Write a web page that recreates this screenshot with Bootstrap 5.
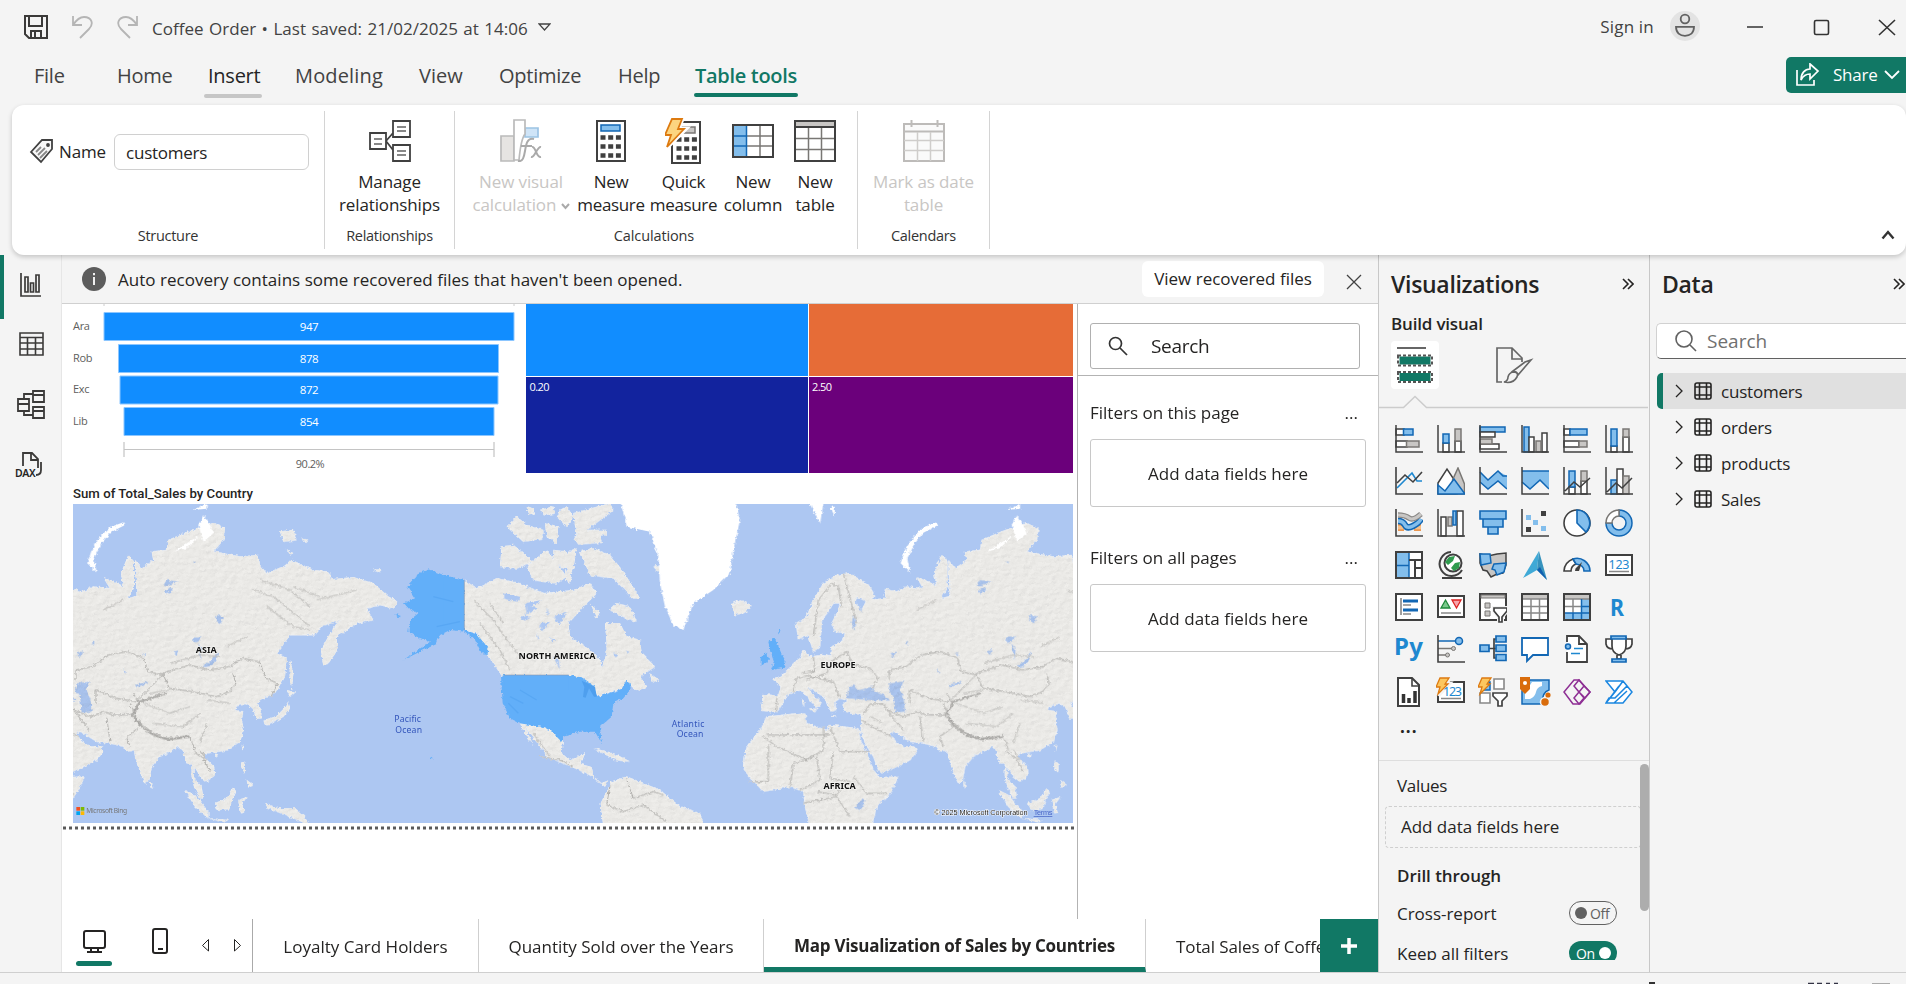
<!DOCTYPE html>
<html lang="en">
<head>
<meta charset="utf-8">
<title>Coffee Order</title>
<link href="https://cdn.jsdelivr.net/npm/bootstrap@5.3.0/dist/css/bootstrap.min.css" rel="stylesheet">
<style>
:root{--pbi-green:#117865;--pane:#f4f4f4;--ink:#252423}
html,body{height:100%;overflow:hidden}
body{background:var(--pane);font-family:"Open Sans","Noto Sans",sans-serif;color:var(--ink);font-size:17px;line-height:23px;letter-spacing:0}
svg{display:block;flex:none}
/* title bar and tabs */
.titlebar{height:50px;padding-left:24px;color:#424242}
.titlebar .save{margin-top:15px}
.titlebar .hist{margin-top:16px}
.doc{margin:17px 0 0 14px;letter-spacing:.02px;word-spacing:1px}
.doc-arrow{margin:23px 0 0 10px}
.signin{margin:15px 16px 0 0;letter-spacing:.2px}
.avatar{margin-top:11px}
.tabs{height:55px;font-size:20px;line-height:28px;color:#424242;letter-spacing:-.25px;padding-left:34px}
.tabs .tab{padding-top:12px;height:43px;flex:none;width:83px}
.tabs .tab:nth-child(2){width:91px}
.tabs .tab:nth-child(3){width:87px;color:#242424}
.tabs .tab:nth-child(4){width:124px;letter-spacing:.15px}
.tabs .tab:nth-child(5){width:80px;letter-spacing:0}
.tabs .tab:nth-child(6){width:119px}
.tabs .tab:nth-child(7){width:77px}
.tabs .tab:nth-child(8){width:110px;color:var(--pbi-green);font-weight:600;letter-spacing:-.3px}
.tabs i{display:block;height:4px;width:58px;border-radius:2px;background:#c6c6c6;margin:4px 0 0 -4px}
.tabs .tab:nth-child(8) i{background:var(--pbi-green);margin:3px 0 0 -1px;width:104px}
.share{height:36px;width:120px;background:var(--pbi-green);color:#fff;border-radius:5px 0 0 5px;font-size:17px;padding-left:9px;margin-top:7px}
.share span{margin:0 7px 0 12px}
/* ribbon */
.ribbon{height:150px;margin-left:12px;background:#fff;border-radius:12px;box-shadow:0 2px 5px rgba(0,0,0,.2);position:relative;z-index:3;padding:6px 0;letter-spacing:-.12px}
.grp{height:138px;border-right:1.5px solid #d4d4d4;display:flex;flex-direction:column;width:130px}
.g-structure{width:313px}.g-calc{width:403px}.g-cal{width:132px}
.grp .cap{margin-top:auto;height:24px;line-height:22px;font-size:14.5px;letter-spacing:-.3px;text-align:center;color:#333}
.g-calc .cap{padding-right:4px;letter-spacing:-.12px}
.namerow{padding:23px 0 0 17px}
.namerow svg{margin:4px 4px 0 0}
.namerow label{margin-top:6px}
.nm{width:195px;height:36px;border:1.5px solid #d0d0d0;border-radius:6px;padding:6px 0 0 11px;margin-left:8px;letter-spacing:-.25px}
.rb{text-align:center;display:flex;flex-direction:column;align-items:center}
.rb .ic{height:53px;padding-top:6px;margin-bottom:6px;display:flex;align-items:center}
.g-calc .rb:nth-child(1){width:108px}.g-calc .rb:nth-child(2){width:72px}.g-calc .rb:nth-child(3){width:73px}.g-calc .rb:nth-child(4){width:66px}.g-calc .rb:nth-child(5){width:58px}
.g-calc .row-btns{padding-left:12px}
.g-calc .rb:nth-child(2),.g-calc .rb:nth-child(3){letter-spacing:-.35px}
.dis{color:#c8c6c4}
.collapse-arrow{margin:0 11px 9px 0}
/* body */
.rail{width:62px;border-right:1px solid #e6e6e6;position:relative}
.rail .on{position:absolute;left:0;top:0;width:4px;height:64px;background:var(--pbi-green)}
.center{width:1316px}
.notice{height:49px;border-bottom:1.5px solid #d0d0d0;padding:0 16px 0 20px}
.notice .msg{margin-left:12px;letter-spacing:.02px}
.notice .close-x{margin:5px 0 0 22px}
.vrf{width:182px;height:36px;background:#fff;border-radius:6px;text-align:center;padding-top:6px}
.report{width:1015px;background:#fff;height:615px;overflow:hidden}
.worldmap{margin:-1px 0 0 11px}
.filters{border-left:1.5px solid #b3b3b3;background:#fff}
.fsearch{width:270px;height:46px;border:1.5px solid #b0b0b0;border-radius:3px;margin:19px 0 6px 12px;font-size:19px;padding-left:17px;letter-spacing:-.3px}
.fsearch span{margin-left:23px}
.flist{border-top:1.5px solid #b3b3b3;padding:25px 0 0 12px}
.drop{width:276px;height:68px;border:1.5px solid #c8c8c8;border-radius:3px;display:flex;align-items:center;justify-content:center;margin:14px 0 39px;letter-spacing:.05px}
.frow{width:268px;height:24px}
.pages{height:53px;background:#fff}
.pages .pg{height:53px;display:flex;align-items:center;justify-content:center;border-right:1.5px solid #cfcfcf;padding-top:2px;width:227px}
.pages .pg:nth-of-type(1){border-left:1.5px solid #aaa}
.pages .pg:nth-of-type(2){width:285px}
.pages .act{font-weight:700;border-bottom:5px solid var(--pbi-green);padding-top:5px;width:382px!important;letter-spacing:-.28px}
.pages .cut{width:174px;padding-left:30px;letter-spacing:-.1px}
.addp{width:58px;background:var(--pbi-green);height:53px}
.viz{width:272px;border-left:1.5px solid #c8c8c8;border-right:1.5px solid #c8c8c8}
.phead{padding:13px 15px 0 12px}
.data .phead{padding-right:1px}
.ptitle{font-size:23px;font-weight:600;line-height:32px;letter-spacing:-.3px}
.build{padding:12px 0 1px 12px;font-weight:600;letter-spacing:-.18px}
.icg{display:grid;grid-template-columns:repeat(6,42px);grid-auto-rows:42px;padding:16px 0 0 16px}
.wide{margin-left:-1px}
.more{height:55px;margin-top:-14px;padding:10px 0 0 21px;letter-spacing:1px;font-weight:700}
.wells{border-top:1.5px solid #dedede;height:200px;overflow:hidden}
.wells>.fields{width:261px}
.wlabel{padding:13px 0 0 18px;height:45px;letter-spacing:-.3px}
.dash{width:256px;height:42px;border:1.5px dashed #cfcfcf;border-radius:4px;margin-left:6px;padding:8px 0 0 15px;letter-spacing:-.03px}
.drill{padding:16px 0 0 18px;font-weight:600;letter-spacing:-.05px}
.opt{padding:14px 23px 0 18px;letter-spacing:-.02px}
.opt+.opt{padding-top:16px}
.sb{width:9px;height:147px;background:#adadad;border-radius:5px;margin-top:3px}
.tg{width:48px;height:24px;border-radius:12px;font-size:14px;display:flex;align-items:center;letter-spacing:-.3px}
.tg.off{border:1.5px solid #616161;color:#616161;padding-left:5px}
.tg.onn{background:var(--pbi-green);color:#fff;padding-left:7px}
.knob{width:12px;height:12px;border-radius:50%;background:#616161;margin-right:3px}
.onn .knob{background:#fff;margin-left:4px}
.dsearch{height:36px;width:250px;background:#fff;border:1.5px solid #d1d1d1;border-right:0;border-bottom:1.5px solid #616161;border-radius:5px 0 0 5px;margin:23px 0 14px 6px;padding-left:18px;font-size:19px;color:#707070}
.dsearch span{margin-left:10px}
.tb{height:36px;margin-left:7px;padding-left:18px;letter-spacing:-.2px}
.tb span{margin-left:-8px}
.tb.cur{background:#e0e0e0;border-left:6px solid var(--pbi-green);border-radius:5px 0 0 5px;padding-left:12px}
.status{height:12px;border-top:1.5px solid #cfcfcf;overflow:hidden}
/* icon strokes: dark outline, blue, grey */
.k{stroke:#404040;fill:#fff}.b{stroke:#1267b4;fill:#83beec}.g{stroke:#797774;fill:#c8c6c4}.n{fill:none}
</style>
</head>
<body class="d-flex flex-column">
<header class="flex-shrink-0">
 <div class="titlebar d-flex align-items-start">
  <svg class="save" width="24" height="24" viewBox="0 0 24 24" fill="none" stroke="#3b3a39" stroke-width="2"><path d="M1 1h22v22H5l-4-4zM5 1v10h13V1M7 23v-7h10v7M11 16v6"/></svg>
  <svg class="hist ms-4" width="21" height="23" viewBox="0 0 21 23" fill="none" stroke="#b5b5b5" stroke-width="1.800"><path d="M1 0v9h9M1 9C5 3 9 1 12 1c8 0 10 7 5 12l-9 9"/></svg>
  <svg class="hist ms-4" width="21" height="23" viewBox="0 0 21 23" fill="none" stroke="#b5b5b5" stroke-width="1.800"><path d="M20 0v9h-9M20 9C16 3 12 1 9 1 1 1-1 8 4 13l9 9"/></svg>
  <span class="doc text-nowrap">Coffee Order • Last saved: 21/02/2025 at 14:06</span>
  <svg class="doc-arrow" width="13" height="9" viewBox="0 0 13 9" fill="none" stroke="#424242" stroke-width="1.300"><path d="M1 1h11L6.500 7z"/></svg>
  <div class="d-flex ms-auto">
   <span class="signin text-nowrap">Sign in</span>
   <svg class="avatar" width="30" height="30" viewBox="0 0 30 30"><circle cx="15" cy="15" r="15" fill="#e3e3e3"/><g fill="none" stroke="#616161" stroke-width="1.800"><circle cx="15" cy="8" r="4.300"/><path d="M6 15.800h18c0 6-4 9-9 9s-9-3-9-9z"/></g></svg>
   <svg width="206" height="50" viewBox="1700 0 206 50" fill="none" stroke="#333" stroke-width="1.600"><path d="M1747 27h16M1879 20l16 15M1895 20l-16 15"/><rect x="1814.500" y="20.500" width="14" height="14" rx="1.500"/></svg>
  </div>
 </div>
 <nav class="tabs d-flex">
  <span class="tab">File</span><span class="tab">Home</span><span class="tab">Insert<i></i></span><span class="tab">Modeling</span><span class="tab">View</span><span class="tab">Optimize</span><span class="tab">Help</span><span class="tab">Table tools<i></i></span>
  <div class="share ms-auto d-flex align-items-center">
   <svg width="26" height="24" viewBox="0 0 26 24" fill="none" stroke="#fff" stroke-width="1.700"><path d="M2 7v15h17v-5M15 1l8 7-8 8v-5c-4 0-7 2-9 6 0-7 4-11 9-11z"/></svg>
   <span>Share</span>
   <svg width="16" height="10" viewBox="0 0 16 10" fill="none" stroke="#fff" stroke-width="1.800"><path d="M1 1l7 7 7-7"/></svg>
  </div>
 </nav>
</header>

<section class="ribbon d-flex flex-shrink-0">
 <div class="grp g-structure">
  <div class="namerow d-flex">
   <svg width="26" height="26" viewBox="0 0 26 26" fill="#f8f8f8" stroke="#404040" stroke-width="1.800"><path d="M2 14L13 2h10v9L12 24z"/><circle cx="19" cy="7" r="1" fill="#404040"/><path stroke="#888" d="M7 14l5-5M9 17l7-7M11 20l7-7"/></svg>
   <label>Name</label><div class="nm">customers</div>
  </div>
  <div class="cap">Structure</div>
 </div>
 <div class="grp">
  <div class="rb"><div class="ic"><svg width="42" height="42" viewBox="0 0 42 42" stroke-width="1.800"><path d="M17 21L24 13M17 21l7 9" class="k"/><path class="k" d="M1 13h16v16H1zM24 1h17v16H24zM24 25h17v16H24z"/><path stroke="#888" d="M5 19h8M5 24h8M28 7h9M28 11h9M28 31h9M28 35h9"/></svg></div><span>Manage</span><span>relationships</span></div>
  <div class="cap">Relationships</div>
 </div>
 <div class="grp g-calc">
  <div class="row-btns d-flex">
   <div class="rb dis"><div class="ic"><svg width="42" height="43" viewBox="0 0 42 43" stroke-width="1.700"><path d="M1 17h13v25H1z" fill="#e6e4e2" stroke="#bbb"/><path d="M25 9h13v9H25z" fill="#cfe4f7" stroke="#9cc3e4"/><path d="M14 1h11v14c-4 5-5 15-6 26h-5z" fill="#fff" stroke="#bbb"/><path d="M18 42c5 1 6-4 7-10s2-14 9-12M21 27h11M32 28c4-1 4 11 9 10M41 28c-4-1-6 11-10 10" fill="none" stroke="#aaa" stroke-width="2"/></svg></div><span class="text-nowrap">New visual</span><span class="text-nowrap">calculation <svg class="d-inline" width="9" height="7" viewBox="0 0 9 7" fill="none" stroke="#aaa" stroke-width="2"><path d="M1 1l3.500 4L8 1"/></svg></span></div>
   <div class="rb"><div class="ic"><svg width="30" height="42" viewBox="0 0 30 42"><path class="k" stroke-width="2" d="M1 1h28v40H1z"/><path class="b" stroke-width="1.500" d="M5 5h19v6H5z"/><path stroke="#404040" stroke-width="4.500" stroke-dasharray="5 2.700" d="M4.500 17.500H25M4.500 26.500H25M4.500 35.500H25"/></svg></div><span>New</span><span>measure</span></div>
   <div class="rb"><div class="ic"><svg width="38" height="46" viewBox="2 0 38 46"><path class="k" stroke-width="2" d="M9 4h28v41H9z"/><path class="g" stroke-width="1.500" d="M17 9h15v6H17z"/><path stroke="#404040" stroke-width="4.500" stroke-dasharray="5 2.700" d="M13.500 21.500H34M13.500 30.500H34M13.500 39.500H34"/><path d="M9 1h10l-4 10h7L3 30l4-12H1z" fill="#fcd580" stroke="#fff" stroke-width="5"/><path d="M9 1h10l-4 10h6L4 29l4-12H2z" fill="#fcd580" stroke="#dd7a10" stroke-width="1.800"/></svg></div><span>Quick</span><span>measure</span></div>
   <div class="rb"><div class="ic"><svg width="42" height="34" viewBox="0 0 42 34" stroke-width="2"><path class="k" d="M1 1h40v32H1z"/><path d="M28 2v30M15 12h26M15 22h26" stroke="#797774" stroke-width="1.500"/><path d="M2 2h12v30H2z" fill="#83beec"/><path d="M14.500 2v30M2 12h12M2 22h12" stroke="#1267b4" stroke-width="1.500"/><path class="n" stroke="#404040" d="M1 1h40v32H1z"/></svg></div><span>New</span><span>column</span></div>
   <div class="rb"><div class="ic"><svg width="42" height="42" viewBox="0 0 42 42" stroke-width="2"><path class="k" d="M1 1h40v40H1z"/><path d="M2 2h38v5H2z" fill="#c8c6c4"/><path d="M2 7h38" stroke="#404040"/><path d="M14.500 8v32M27.500 8v32M2 18.500h38M2 29.500h38" stroke="#797774" stroke-width="1.500"/></svg></div><span>New</span><span>table</span></div>
  </div>
  <div class="cap">Calculations</div>
 </div>
 <div class="grp g-cal">
  <div class="rb dis"><div class="ic"><svg width="42" height="42" viewBox="0 0 42 42" stroke-width="2" fill="#fafafa" stroke="#bdbbb9"><path d="M1 4h40v37H1zM1 11.500h40M8.500 0v7M34.500 0v7"/><path d="M14.500 12v29M27.500 12v29M1 20.500h40M1 30.500h40" stroke="#cfcdcb" stroke-width="1.500"/></svg></div><span>Mark as date</span><span>table</span></div>
  <div class="cap">Calendars</div>
 </div>
 <svg class="collapse-arrow ms-auto align-self-end" width="14" height="10" viewBox="0 0 14 10" fill="none" stroke="#333" stroke-width="2.400"><path d="M1.500 8.500L7 2l5.500 6.500"/></svg>
</section>

<main class="d-flex flex-grow-1 overflow-hidden">
 <nav class="rail flex-shrink-0">
  <div class="on"></div>
  <svg width="61" height="240" viewBox="0 255 61 240" fill="none" stroke="#3b3a39" stroke-width="2">
   <path d="M21 273v23h20M25 277h3v15h-3zM30.500 283h3v9h-3zM36 275h3v17h-3z" stroke-width="1.700"/>
   <path d="M20 333h23v22H20zM20 337.500h23M20 343h23M20 349h23M27.500 337v18M35.500 337v18" stroke-width="1.600"/>
   <path d="M18 399h11v12H18zM18 404h11M33 391h11v11H33zM33 395h11M33 407h11v11H33zM33 411h11M24 399v-5h9M24 411v4h9" stroke-width="1.800"/>
   <path d="M23 466v-13h9l6 6v9M31 453v7h7M41 462v8q0 5-5 5" stroke-width="1.800"/>
   <text x="15" y="477" font-family="Noto Sans" font-weight="600" font-size="10.500" letter-spacing="-.3" fill="#252423" stroke="none">DAX</text>
  </svg>
 </nav>
 <div class="center d-flex flex-column flex-shrink-0">
  <div class="notice d-flex align-items-center">
   <svg width="24" height="24" viewBox="0 0 24 24"><circle cx="12" cy="12" r="12" fill="#5c5c5c"/><path d="M12 10v8M12 6v2.200" stroke="#fff" stroke-width="1.800"/></svg>
   <span class="msg text-nowrap">Auto recovery contains some recovered files that haven't been opened.</span>
   <div class="vrf ms-auto">View recovered files</div>
   <svg class="close-x" width="16" height="16" viewBox="0 0 16 16" stroke="#424242" stroke-width="1.300"><path d="M1 1l14 14M15 1L1 15"/></svg>
  </div>
  <div class="d-flex">
   <div class="report">
    <svg width="1015" height="201" viewBox="62 304 1015 201" font-family="Open Sans" font-size="11">
     <path d="M104 304v2M514 304v2" stroke="#ccc"/>
     <g fill="#118dff" stroke="#8cc6ff"><path d="M104 312.500h410v28H104zM118.500 344.500h380v28h-380zM120 376h378v28H120zM124 407.500h370v28H124z"/></g>
     <g fill="#fff" text-anchor="middle" letter-spacing="-.4" font-size="11.500"><text x="309" y="331">947</text><text x="309" y="363">878</text><text x="309" y="394">872</text><text x="309" y="426">854</text></g>
     <g fill="#605e5c" font-size="11" letter-spacing="-.3"><text x="73" y="330">Ara</text><text x="73" y="362">Rob</text><text x="73" y="393">Exc</text><text x="73" y="425">Lib</text><text x="310" y="468" text-anchor="middle" letter-spacing="-.5">90.2%</text></g>
     <path d="M124 442v15M494 442v15M124 449.500h370" stroke="#c4c4c4" fill="none" stroke-width="1.200"/>
     <path fill="#118dff" d="M526 304h282v72H526z"/><path fill="#e66c37" d="M809 304h264v72H809z"/><path fill="#12239e" d="M526 377h282v96H526z"/><path fill="#6b007b" d="M809 377h264v96H809z"/>
     <g fill="#fff" font-size="11"><text x="529.500" y="391" textLength="20">0.20</text><text x="812" y="391" textLength="20">2.50</text></g>
     <text x="73" y="497.500" font-family="Roboto" font-size="13.200" font-weight="500" fill="#252423" textLength="180">Sum of Total_Sales by Country</text>
    </svg>
    <svg class="worldmap" width="1000" height="319" viewBox="39 42 3000 957">
     <defs>
      <filter id="coast" x="-5%" y="-5%" width="110%" height="110%"><feTurbulence type="fractalNoise" baseFrequency=".11" numOctaves="3" seed="4"/><feDisplacementMap in="SourceGraphic" scale="12" xChannelSelector="R" yChannelSelector="G"/></filter>
      <filter id="relief" x="0" y="0" width="100%" height="100%" color-interpolation-filters="sRGB"><feTurbulence type="fractalNoise" baseFrequency=".05 .09" numOctaves="3" seed="9" result="n"/><feDiffuseLighting in="n" surfaceScale="1.100" lighting-color="#ffffff" result="l"><feDistantLight azimuth="225" elevation="76"/></feDiffuseLighting><feComposite in="l" in2="SourceGraphic" operator="in" result="s"/><feBlend in="s" in2="SourceGraphic" mode="multiply"/></filter>
      <g id="ea">
       <path fill="#f2f1ee" d="M-20 330L35 325 35 297 70 305 100 290 150 295 130 262 165 275 190 290 183 250 205 195 222 215 222 290 205 325 230 318 225 210 245 235 280 212 275 185 320 180 325 150 385 125 425 110 460 100 495 115 490 150 460 185 540 200 595 195 600 225 620 250 680 225 695 210 760 240 805 245 815 268 880 262 940 280 985 320 1012 335 1000 355 960 345 920 355 940 390 890 400 855 425 830 435 832 480 805 520 790 525 783 480 805 440 830 400 845 392 790 405 765 435 690 435 665 470 650 490 680 505 675 560 650 605 610 625 590 640 605 660 602 685 588 685 578 655 560 640 530 648 525 660 550 665 545 690 552 720 540 755 500 780 440 790 430 800 462 830 465 855 440 875 420 860 410 840 400 835 402 865 425 890 430 925 420 925 402 890 395 860 395 820 380 820 368 780 355 770 330 785 300 800 275 830 268 870 255 880 245 860 225 800 222 780 200 785 190 770 150 760 110 755 62 725 50 730 65 755 90 770 125 770 130 785 110 810 60 835 25 850 15 840 0 800 -25 760 -37 725 -35 672 -60 672 -85 665 -92 645 -80 632 -100 625 -115 635 -112 660 -125 665 -140 640 -150 620 -195 592 -190 605 -155 640 -170 655 -190 630 -215 600 -235 605 -260 615 -272 640 -290 668 -335 662 -332 612 -285 618 -278 590 -300 565 -280 560 -260 545 -240 520 -220 505 -212 480 -200 485 -195 500 -150 495 -130 500 -125 470 -90 450 -85 430 -115 425 -125 400 -105 360 -100 340 -120 340 -135 365 -155 390 -160 470 -180 485 -195 435 -225 450 -232 400 -200 380 -180 330 -150 280 -110 255 -70 250 -10 290 5 320 -20 335 -50 320 -55 340 -35 360z"/>
       <path fill="#f2f1ee" d="M-320 680L-205 668-200 700-140 720-130 705-45 715-40 745-15 800 0 840 20 862 72 860 60 890 10 950-5 1010-190 1010-205 950-210 905-250 890-330 905-380 850-390 830-380 770-340 720z"/>
       <path fill="#adc7f2" d="M50 580L90 575 80 600 92 630 95 665 65 668 60 620 45 600zM-80 625L-75 595-58 582-45 600-30 598-5 590 0 600 40 620 50 632 10 632-40 628zM470 375l22 5-10 20-15-8zM430 525q30-5 40-40l4 4q-8 40-40 42zM320 270l35 5-35 12 20 12-20 15-5-10 15-12-20-6zM400 440l25 0-10 15-15 4zM415 460l12 20-4 30-5-25zM340 485l15-5-5 15zM225 585l35-10 5 5-35 12zM190 535l8 12-4 4zM245 488l10 6-2 6zM52 490l18-6-12 20zM95 460l8-8 0 12zM-55 955l20-30 12 5-15 30zM400 213l8 4-6 3zM-60 375l8 30-5 15-8-20zM-45 350l12 8-6 8z"/>
       <path fill="#f2f1ee" d="M660 125l40-5 10 30-40 5zM720 145l25 5-5 8zM940 240l25-2-8 8zM680 178l20 12-8 6zM690 510l10 40-5 50-6-40zM685 635l5 20-20 25-50 25-10-12 40-15 20-20zM680 600l25 8-15 12zM375 900l30 15 40 50 0 20-40-35zM465 940l35-15 20-30 8 12-12 20-8 30-35 2zM445 985l60 5-10 6zM535 930l25-8-15 20 8 25-10 2zM545 815l10 5 0 30-12-20zM560 870l20 15-15 8zM270 872l10 18-8 4zM615 940l40 15 50 0 30 25 10 25-30-15-50-20-40-15zM545 765l6 0-3 18zM465 790l10 5-8 8zM39 880l35-18-20 40-20 30zM-215 630l8-2-2 22zM-190 655l20 2-5 10zM-125 675l15 2-12 4z"/>
       <path fill="none" stroke="#b5b4b1" stroke-width="3" d="M48 570l0-30 50-10 45-35 60-10 50 20 10 40 45 10-30 30-50 50-60-10-60-25 0 40M308 550l80-25 60 15 60-10 40-25 50 10 20 50 35 15-20 40M308 550l20 45 70 10 70 15 40-15 20-25-10-30M40 660l50 20 40-15 30 10 50 0 30-30-20-35M210 640l30 70-40 30 10 30M230 690l50 40 50 20 60-10 15 40M400 785l30 20 20 40M420 780l20 30M150 755l-10-75M-35 690l30 20 60 30M-30 672l20-30 40 0 20 30 40 50M-290 665l0-45M-240 605l10-40 40-10M-200 570l60-20 20-40 40-25 20 40 50 10 25 30-20 30M-180 500l5 45-40 5M-190 560l70 15 20 50M-180 440l15-110 40-50 20 10 10 60M-90 250l40 150M-320 735l190 0M-330 740l40 30 90 40 50-30 0-70M-130 710l30 75 90 0M-315 765l0 110-60 0M-250 890l10-70 60-20M-170 800l10 70-60 30M-120 785l-10 80 60 10M-60 860l40 50 60 0M-210 940l100-20 40 60M-170 905l60 10 20-30"/>
       <path fill="none" stroke="#a4a3a0" stroke-width="7" opacity=".75" d="M222 680q35 55 100 67l68-8M215 680l25-45 80-25"/>
       <path fill="none" stroke="#cfcecb" stroke-width="4" d="M580 300l60 20 50 40 60 50M600 270l90 30 60 50M620 350l80 60 50 10M250 640l80 30 60-20M280 700l90 10 50-40M440 700l-20 60M500 470l60-30M330 520l90-25 60 5M270 610l60-10M-10 680l40 20M440 630l70 10M770 330l120-30M700 290l80 30M130 360l60-30"/>
      </g>
      <g id="snow" fill="#fff"><path d="M190 97L150 112 120 140 95 180 82 220 110 248 102 205 125 160 150 128 195 105zM430 75l20 30 10 25-30 25-15-50zM400 60l40-18v14zM340 185l80-50-40 40z"/></g>
     </defs>
     <path fill="#adc7f2" d="M0 0h3100v1050H0z"/>
     <g filter="url(#coast)"><g filter="url(#relief)">
      <use href="#ea"/><use href="#ea" x="2440"/>
      <path fill="#f2f1ee" d="M1212 270L1250 295 1310 265 1380 280 1450 310 1540 300 1590 280 1610 310 1570 350 1525 400 1530 440 1590 480 1620 510 1625 535 1640 490 1640 460 1635 400 1680 400 1700 440 1740 450 1745 490 1785 530 1740 560 1760 590 1730 602 1705 580 1685 595 1612 620 1565 562 1325 557 1280 490 1250 430 1212 420zM1380 700L1440 710 1470 720 1508 752 1505 790 1530 812 1575 790 1562 822 1595 832 1600 860 1625 880 1645 872 1635 890 1590 855 1540 832 1460 800 1450 780 1395 712 1420 765 1405 745zM1655 875L1700 860 1800 900 1860 950 1920 970 1935 1010 1630 1010 1622 940zM1325 170l35-5 60 50-50 20-50-5zM1400 230l60-50 60 80-30 20-70-10zM1340 110l30-30 30 25 50 15 0 25-60 10zM1480 180l40 5 10 40-20 10-30-20zM1455 100l40 10-5 50-30-20zM1515 240l20 20-5 20-10-5zM1400 50l20 5 5 15-20 5zM1440 60l40-10 5 20-30 5zM1500 60l20-10 20 30-20 30-30-30zM1540 70l110-30 10 20-80 60 60 0 0 15-90 5zM1540 140l80-10 5 28-70 5zM1560 185l40-10 50 20 40 50 50 80-20 0-60-60-70-10zM1520 190l30-15-10 60-15 30zM1670 340l40 10 20 45-30-10-50-25zM1590 345l30 20-10 20zM1768 550l30 20-20 5zM1600 775l60 15 50 25-40-5zM1780 230l20 0 0 20zM2015 340l30-8 30 15-20 20-30 8z"/>
      <path fill="none" stroke="#b5b4b1" stroke-width="3" d="M1650 885l-10 60 50 20M1700 865l20 60 60-20 30 10M1690 965l60-20 70 50M1440 800l60 10 40 20"/>
      <path fill="none" stroke="#cfcecb" stroke-width="4" d="M1240 330l60 60 40 60 50 60M1260 400l60 80 30 60M1420 730l50 70M1290 340l40 60"/>
     </g>
      <use href="#snow"/><use href="#snow" x="2440"/>
      <path fill="#fff" d="M1680 30H2025L2040 90 2020 180 2010 250 1960 300 1900 340 1870 420 1840 405 1815 350 1800 280 1795 200 1770 125 1700 110zM2250 42l40 0-10 60zM2310 50l15 0 0 30z"/>
      <path fill="#adc7f2" d="M1330 310l50 10-10 15-35-8zM1395 340l50-10-30 20 20 5-40 20 15 5-15 12-15-8 20-14zM1480 380l40-15-20 40zM1480 500l15 5 5 35zM1440 400l30-5-25 30zM1460 350l6 20-4 5zM1430 430l8 15-4 4zM1400 280l8 15-5 3zM1470 440l15 12-10 2zM1660 490l15 5-8 8zM1700 480l10 8-8 3zM1560 450l8 4-6 5z"/>
     </g>
     <path fill="#62aff9" filter="url(#coast)" d="M1108 238L1150 255 1212 270 1212 420 1250 432 1285 475 1283 492 1265 490 1245 450 1215 425 1170 420 1140 435 1130 462 1090 480 1030 510 1110 455 1070 440 1045 425 1050 390 1075 370 1050 360 1032 340 1065 325 1042 290 1065 265 1075 250zM1323 562L1330 555 1525 555 1565 562 1600 585 1612 622 1685 597 1698 573 1708 575 1712 598 1690 625 1660 640 1655 680 1620 710 1625 760 1605 725 1560 725 1510 740 1505 755 1470 720 1440 710 1380 700 1350 685 1328 640zM2125 455l20-12 12 30 8 20 12 20-5 20-40 8 10-25-10-30zM2102 500l20-12 5 25-25 15zM1110 798l8 6-4 4zM1005 372l18 6-6 4zM2157 418l4 2-3 14zM960 523l8 0M985 520l4 0M900 512l3 0"/>
     <path fill="#62aff9" d="M1150 262L1213 271V420L1150 412zM1330 555H1526V600H1335z"/>
     <path d="M1213 271V420M1330 555H1526" stroke="#8e9cb0" stroke-width="2"/>
     <path d="M1565 572l40 18 5 30-8 0-15-25-10 28-8-2 4-30z" fill="#4f9fee"/>
     <path d="M1350 620l40 20M1380 600l50 30M1345 640l30 30M1120 320l60 15M1130 410l70-15" stroke="#58a7f4" stroke-width="4"/>
     <g font-family="Noto Sans" font-weight="700" font-size="27" fill="#111" stroke="#f4f4f2" stroke-width="4" paint-order="stroke" text-anchor="middle"><text x="439" y="488" textLength="63">ASIA</text><text x="1491" y="506" textLength="231">NORTH AMERICA</text><text x="2334" y="535" textLength="105">EUROPE</text><text x="2339" y="896" textLength="97">AFRICA</text></g>
     <g font-family="Noto Sans" font-size="26" fill="#3355bb" text-anchor="middle"><text x="1043" y="696" textLength="80">Pacific</text><text x="1046" y="728" textLength="80">Ocean</text><text x="1884" y="711" textLength="98">Atlantic</text><text x="1890" y="742" textLength="80">Ocean</text></g>
     <path fill="#f25022" d="M49 951h11v11H49z"/><path fill="#7fba00" d="M62 951h11v11H62z"/><path fill="#00a4ef" d="M49 964h11v11H49z"/><path fill="#ffb900" d="M62 964h11v11H62z"/>
     <text x="79" y="970" font-family="Noto Sans" font-size="20" fill="#777" textLength="122">Microsoft Bing</text>
     <g font-family="Liberation Sans" font-size="22"><text x="2623" y="975" fill="#222" stroke="#fff" stroke-width="3" paint-order="stroke" textLength="280">© 2025 Microsoft Corporation</text><text x="2921" y="975" fill="#4a68c8" text-decoration="underline" textLength="56">Terms</text></g>
    </svg>
    <svg width="1015" height="8" viewBox="0 0 1015 8"><path d="M1 5h1012" stroke="#5a5a5a" stroke-width="3" stroke-dasharray="3 3"/></svg>
   </div>
   <aside class="filters flex-grow-1">
    <div class="fsearch d-flex align-items-center"><svg width="20" height="20" viewBox="0 0 20 20" fill="none" stroke="#333" stroke-width="1.700"><circle cx="7.500" cy="7.500" r="6"/><path d="M12 12l7 7"/></svg><span>Search</span></div>
    <div class="flist">
     <div class="frow d-flex justify-content-between"><span>Filters on this page</span><span>...</span></div>
     <div class="drop">Add data fields here</div>
     <div class="frow d-flex justify-content-between"><span>Filters on all pages</span><span>...</span></div>
     <div class="drop">Add data fields here</div>
    </div>
   </aside>
  </div>
  <div class="pages d-flex">
   <svg width="190" height="53" viewBox="62 919 190 53" fill="none" stroke="#252423" stroke-width="2"><rect x="84" y="931" width="21" height="17" rx="2"/><path d="M91 948v4M98 948v4M87 952h15"/><rect x="153" y="929" width="14" height="24" rx="2"/><path d="M158 949h5"/><path stroke-width="1" d="M208.500 939.500v11.500L202.500 945.500zM234.500 939.500v11.500l6-5.500z"/><path d="M78.500 963.500h31" stroke="#117865" stroke-width="5" stroke-linecap="round"/></svg>
   <div class="pg">Loyalty Card Holders</div>
   <div class="pg">Quantity Sold over the Years</div>
   <div class="pg act">Map Visualization of Sales by Countries</div>
   <div class="pg cut border-0 justify-content-start overflow-hidden text-nowrap">Total Sales of Coffee</div>
   <div class="addp d-flex align-items-center justify-content-center"><svg width="16" height="16" viewBox="0 0 16 16" stroke="#fff" stroke-width="3.500"><path d="M8 0v16M0 8h16"/></svg></div>
  </div>
 </div>

 <aside class="viz flex-shrink-0">
  <div class="phead d-flex align-items-center"><span class="ptitle">Visualizations</span><svg class="ms-auto" width="12" height="12" viewBox="0 0 12 12" fill="none" stroke="#252423" stroke-width="1.600"><path d="M1 1l5 5-5 5M6 1l5 5-5 5"/></svg></div>
  <div class="build">Build visual</div>
  <svg width="269" height="73" viewBox="1379 336 269 73" fill="none">
   <rect x="1391" y="341" width="48" height="48" rx="4" fill="#fff"/><path d="M1397 348h29" stroke="#666" stroke-width="2"/><path d="M1399 356h32v9h-32zM1399 372.500h32v9h-32z" fill="#117865" stroke="#fff" stroke-width="1"/><path d="M1398 355.500h34v10h-34zM1398 372h34v10h-34z" stroke="#555" stroke-width="2" stroke-dasharray="3 2"/>
   <path d="M1502 382h-5v-34h15l10 10v4M1512 348v11h10" stroke="#666" stroke-width="1.700"/><path d="M1531 360l-13 15q-1-4-5-4l12-9zM1513 372q6 0 4 5-4 7-13 5 4-1 4-5 1-4 5-5z" fill="#f4f4f4" stroke="#666" stroke-width="1.600"/>
   <path d="M1379 407.500h24.500l11.500-11 11.500 11H1650" stroke="#ccc" stroke-width="1.500"/>
  </svg>
  <div class="icg">
   <svg width="28" height="28" viewBox="0 0 28 28"><g stroke-width="1.500"><path class="k" d="M1 4h8v6H1zM1 16h11v6H1z"/><path class="b" d="M8.500 4h9.500v6H8.500z"/><path class="g" d="M11.500 16H24v6H11.500z"/><path class="k n" d="M1 0v27h27"/></g></svg>
   <svg width="28" height="28" viewBox="0 0 28 28"><g stroke-width="1.500"><path class="k" d="M6 18h6v9H6zM18 16h6v11h-6z"/><path class="b" d="M6 9h6v9H6z"/><path class="g" d="M18 4h6v12h-6z"/><path class="k n" d="M1 0v27h27"/></g></svg>
   <svg width="28" height="28" viewBox="0 0 28 28"><g stroke-width="1.500"><path class="b" d="M1 2h25v5H1z"/><path class="k" d="M1 7h15v5H1zM1 19h19v5H1z"/><path class="g" d="M1 14h12v5H1z"/><path class="k n" d="M1 0v27h27"/></g></svg>
   <svg width="28" height="28" viewBox="0 0 28 28"><g stroke-width="1.500"><path class="b" d="M3 2h5v25H3z"/><path class="k" d="M8 12h5v15H8zM21 8h5v19h-5z"/><path class="g" d="M15 16h5v11h-5z"/><path class="k n" d="M1 0v27h27"/></g></svg>
   <svg width="28" height="28" viewBox="0 0 28 28"><g stroke-width="1.500"><path class="k" d="M1 4h6v6H1zM1 16h15v6H1z"/><path class="b" d="M7 4h17v6H7z"/><path class="g" d="M16 16h8v6h-8z"/><path class="k n" d="M1 0v27h27"/></g></svg>
   <svg width="28" height="28" viewBox="0 0 28 28"><g stroke-width="1.500"><path class="k" d="M6 21h6v6H6zM18 12h6v15h-6z"/><path class="b" d="M6 4h6v17H6z"/><path class="g" d="M18 4h6v8h-6z"/><path class="k n" d="M1 0v27h27"/></g></svg>

   <svg width="28" height="28" viewBox="0 0 28 28"><g stroke-width="1.600" fill="none"><path stroke="#1e88d0" d="M2 21L17 6l5 8h5"/><path stroke="#404040" d="M2 16l8-8 8 7L27 5"/><path class="k n" d="M1 0v27h27"/></g></svg>
   <svg width="28" height="28" viewBox="0 0 28 28"><g stroke-width="1.500"><path class="k" d="M1 16L10 2l10 15v10H1z"/><path class="g" d="M21 1l6.500 16v10h-8l-4-14z"/><path class="b" d="M1 18l7 6 9-12 11 15H1z"/></g></svg>
   <svg width="28" height="28" viewBox="0 0 28 28"><g stroke-width="1.500"><path fill="#83beec" d="M1 4l8 9L19 4l9 5v13l-9-8-10 8-8-7z"/><path class="n" stroke="#1267b4" d="M1 5l8 8L19 4l5 5h4M1 15l8 7 10-8 9 8"/><path class="k n" d="M1 0v27h27"/></g></svg>
   <svg width="28" height="28" viewBox="0 0 28 28"><g stroke-width="1.500"><path fill="#83beec" d="M1 4h27v18l-9-8-10 8-8-6z"/><path class="n" stroke="#1267b4" d="M1 4h27M1 15l8 7 10-9 9 9"/><path class="k n" d="M1 0v27h27"/></g></svg>
   <svg width="28" height="28" viewBox="0 0 28 28"><g stroke-width="1.500"><path class="k" d="M6 20h6v7H6zM18 14h6v13h-6z"/><path class="b" d="M6 4h6v16H6z"/><path class="g" d="M18 4h6v10h-6z"/><path class="k n" d="M1 0v27h27M2 24l9-9 6 5 10-9"/></g></svg>
   <svg width="28" height="28" viewBox="0 0 28 28"><g stroke-width="1.500"><path class="b" d="M6 13h6v14H6z"/><path class="k" d="M12 2h6v25h-6z"/><path class="g" d="M18 9h6v18h-6z"/><path class="k n" d="M1 0v27h27M2 25l9-9 6 5 10-10"/></g></svg>

   <svg width="28" height="28" viewBox="0 0 28 28"><g fill="none"><path stroke="#e8791c" stroke-width="1.500" d="M3 16h7M18 16h8M3 21h6M19 21h7"/><path stroke="#f6c08a" stroke-width="3.500" d="M3 18.500h6M18 18.500h8"/><path stroke="#1267b4" stroke-width="6.500" d="M3 12q5 0 7 4t8 1 8-7"/><path stroke="#83beec" stroke-width="3.500" d="M3 12q5 0 7 4t8 1 8-7"/><path stroke="#8a8886" stroke-width="5.500" d="M3 6q7 0 11 3t12-4"/><path stroke="#c8c6c4" stroke-width="3" d="M3 6q7 0 11 3t12-4"/><path stroke="#404040" stroke-width="1.600" d="M1 0v27h27"/></g></svg>
   <svg width="28" height="28" viewBox="0 0 28 28"><g stroke-width="1.500"><path class="k" d="M4 8h5v19H4zM20 2h6v25h-6z"/><path class="g" d="M11 8h4v9h-4z"/><path class="b" d="M16 2h3v14h-3z"/><path class="k n" d="M1 0v27h27"/></g></svg>
   <svg width="28" height="28" viewBox="0 0 28 28"><g class="b" stroke-width="1.600"><path d="M1 2h26v8H1zM4 10h20v8H4zM9 18h10v7H9z"/></g></svg>
   <svg width="28" height="28" viewBox="0 0 28 28"><path fill="#83beec" d="M5 6h5v5H5zM12 11h5v5h-5zM20 17h5v5h-5z"/><path fill="#404040" d="M20 2h5v5h-5zM5 18h5v5H5z"/><path class="k n" stroke-width="1.600" d="M1 0v27h27"/></svg>
   <svg width="28" height="28" viewBox="0 0 28 28"><circle class="k" cx="14" cy="14" r="13" stroke-width="1.600"/><path class="b" stroke-width="1.600" d="M14 1a13 13 0 0 1 9 22l-9-9z"/></svg>
   <svg width="28" height="28" viewBox="0 0 28 28"><path d="M14 4a10 10 0 1 1-10 10" fill="none" stroke="#83beec" stroke-width="6"/><path d="M14 1a13 13 0 1 1-13 13h6a7 7 0 1 0 7-7z" fill="none" stroke="#1267b4" stroke-width="1.500"/><path d="M1 14A13 13 0 0 1 14 1v6a7 7 0 0 0-7 7z" fill="#fff" stroke="#797774" stroke-width="1.500"/></svg>

   <svg width="28" height="28" viewBox="0 0 28 28"><path class="k" stroke-width="2" d="M1 1h26v26H1z"/><path fill="#83beec" d="M2 2h12v24H2z"/><path d="M2 14.500h12M14 1v26" stroke="#1267b4" stroke-width="1.500"/><path class="k n" stroke-width="2" d="M1 1h26v26H1zM14 9h13M20 9v18M20 17h7"/></svg>
   <svg width="28" height="28" viewBox="0 0 28 28"><circle cx="16" cy="12" r="8.500" class="k" stroke-width="2"/><path fill="#2f9b4e" d="M12 6l6-1-2 5-5 4-3-3zM18 12l5-1-1 6-5 3-3-3z"/><path class="k n" stroke-width="2" d="M14 1A12 12 0 1 0 25 19M5 27h20M15 24v3"/></svg>
   <svg width="28" height="28" viewBox="0 0 28 28" stroke-width="1.500"><path fill="#c8c6c4" stroke="#404040" d="M1 3l8 2 9-2 9-1v12l-3 8-6 1-6 3-4-6-4-1-3-7z"/><path class="b" d="M1 3h10l1 9-10 2zM15 13l12-1-2 9-7 3-2-5-3-1z"/></svg>
   <svg width="28" height="30" viewBox="0 0 28 30"><path fill="#3fa9d6" d="M18 0L2 27l14-8z"/><path fill="#3793bd" d="M18 0l8 29-10-10z"/><path fill="#0f5fb0" d="M16 19l3-3 7 13z"/></svg>
   <svg width="28" height="28" viewBox="0 0 28 28" stroke-width="1.600"><path class="k" d="M1 20A13 13 0 0 1 10 8l3 5q-5 2-5 7z"/><path class="b" d="M10 8a13 13 0 0 1 17 12h-6q0-6-8-7z"/><path fill="#404040" d="M19 11l-3 9h-4q0-3 2-4z"/></svg>
   <svg width="28" height="28" viewBox="0 0 28 28"><path class="k" stroke-width="2" d="M1 4h26v20H1z"/><path stroke="#888" stroke-width="1.500" d="M4 20.500h20"/><text x="14" y="17.500" text-anchor="middle" font-size="12.500" font-family="Noto Sans" fill="#1e88d0" textLength="21">123</text></svg>

   <svg width="28" height="28" viewBox="0 0 28 28"><path class="k" stroke-width="2" d="M1 1h26v26H1z"/><path stroke="#888" stroke-width="1.600" d="M6 5v17M8 12h8M8 21h8"/><path stroke="#1267b4" stroke-width="2.800" d="M8 8h15M8 17h15"/></svg>
   <svg width="28" height="28" viewBox="0 0 28 28"><path class="k" stroke-width="2" d="M1 3h26v21H1z"/><path stroke="#888" stroke-width="1.500" d="M4 20h20"/><path fill="#7ac98c" stroke="#1f8a3b" stroke-width="1.300" d="M4 15h9L8.500 7z"/><path fill="#f7a6ac" stroke="#d22" stroke-width="1.300" d="M15 7h9l-4.500 8z"/></svg>
   <svg width="28" height="30" viewBox="0 0 28 30"><path class="k" stroke-width="2" d="M1 1h26v26H1z"/><path class="g" stroke-width="1" d="M2 2h24v3H2zM6 10h5v5H6zM6 18h5v5H6z"/><path d="M15 15h13v3l-5 6v5h-3v-5l-5-6z" stroke="#f4f4f4" stroke-width="4"/><path class="k" stroke-width="1.700" d="M15 15h13v3l-5 6v5h-3v-5l-5-6z"/></svg>
   <svg width="28" height="28" viewBox="0 0 28 28"><path class="k" stroke-width="2" d="M1 1h26v26H1z"/><path fill="#c8c6c4" d="M2 2h24v4H2z"/><path stroke="#888" stroke-width="1.500" d="M2 6h24M2 13.500h24M2 20h24M10 6v20M18.500 6v20"/></svg>
   <svg width="28" height="28" viewBox="0 0 28 28"><path class="k" stroke-width="2" d="M1 1h26v26H1z"/><path fill="#c8c6c4" d="M2 2h24v4H2z"/><path fill="#83beec" d="M2 20h24v6H2zM18.500 6H26v20h-7.500z"/><path stroke="#888" stroke-width="1.500" d="M2 6h24M2 13.500h16M10 6v14"/><path stroke="#1267b4" stroke-width="1.500" d="M18.500 6v20M2 20h24M18 13.500h8M10 20v6"/><path class="k n" stroke-width="2" d="M1 1h26v26H1z"/></svg>
   <svg width="28" height="28" viewBox="0 0 28 28"><text x="5" y="23" font-size="24" font-weight="700" font-family="Noto Sans" fill="#1e88d0" textLength="14" lengthAdjust="spacingAndGlyphs">R</text></svg>

   <svg class="wide" width="30" height="28" viewBox="0 0 30 28"><text x="0" y="20" font-size="24" font-weight="700" font-family="Noto Sans" fill="#1e88d0" textLength="29">Py</text></svg>
   <svg width="28" height="28" viewBox="0 0 28 28"><path stroke="#1267b4" stroke-width="1.500" d="M1 6h18"/><circle class="b" cx="22" cy="6" r="3.500" stroke-width="1.500"/><path stroke="#797774" stroke-width="1.300" d="M1 13.500h14M1 20h8"/><circle class="g" cx="16.500" cy="13.500" r="2"/><circle class="g" cx="10.500" cy="20" r="2"/><path class="k n" stroke-width="1.600" d="M1 0v27h27"/></svg>
   <svg width="28" height="28" viewBox="0 0 28 28" stroke-width="1.700"><path class="k n" d="M10 13.500h7M17 4h-2v19h2"/><path class="b" d="M1 10h9v6.500H1zM17 1h10v6H17zM17 10h10v6.500H17zM17 19.500h10v6H17z"/></svg>
   <svg width="28" height="28" viewBox="0 0 28 28"><path d="M1 3h26v17H12l-6 6v-6H1z" fill="#fff" stroke="#1267b4" stroke-width="1.800"/></svg>
   <svg width="28" height="28" viewBox="0 0 28 28"><path class="k" stroke-width="1.800" d="M4 7V1h12l8 8v18H4V17"/><path class="k n" stroke-width="1.800" d="M16 1v8h8"/><circle class="b" cx="5" cy="11.500" r="2.500" stroke-width="1.500"/><path stroke="#1e88d0" stroke-width="1.500" d="M11 13.500h9M8 18.500h9"/></svg>
   <svg width="28" height="28" viewBox="0 0 28 28" stroke-width="1.700"><path class="k" d="M7 3v8q0 7 7 9 7-2 7-9V3zM7 4H1v5q1 5 7 5M21 4h6v5q-1 5-7 5M12 20v4h4v-4"/><path class="b" d="M6 1h15v3H6zM7 24h14v3H7z"/></svg>

   <svg width="28" height="30" viewBox="0 0 28 30"><path class="k" stroke-width="2" d="M3 1h14l7 7v21H3z"/><path class="k n" stroke-width="1.600" d="M17 1v8h7"/><path stroke="#333" stroke-width="3.500" d="M8.500 26v-9M14 26v-5M20 26V14"/></svg>
   <svg class="wide" width="30" height="28" viewBox="0 0 30 28"><path class="k" stroke-width="2" d="M2 5h26v20H2z"/><path stroke="#888" stroke-width="1.500" d="M5 21.500h20"/><path d="M4 1h9L9 7h3L2 18l2-8H1z" stroke="#f4f4f4" stroke-width="5"/><text x="7" y="19" font-size="12.500" font-family="Noto Sans" fill="#1e88d0" textLength="19">123</text><path d="M4 1h9L9 7h3L2 17l2-7H0z" fill="#fcc75f" stroke="#dd7a10" stroke-width="1.300"/></svg>
   <svg class="wide" width="30" height="30" viewBox="0 0 30 30"><path stroke="#888" fill="#fff" stroke-width="1.600" d="M16 2h10v10H16zM2 16h10v10H2z"/><path class="b" stroke-width="1.500" d="M5 5h7v8H5z"/><path class="k" stroke-width="1.700" d="M15 16h14v3l-5 5v5h-4v-5l-5-5z"/><path d="M4 1h9L9 7h3L2 17l2-7H0z" fill="#fcc75f" stroke="#dd7a10" stroke-width="1.300"/></svg>
   <svg class="wide" width="31" height="30" viewBox="0 0 31 30"><path fill="#83beec" stroke="#1267b4" stroke-width="1.500" d="M10 3h19v10q-7 2-7 14H2V14z"/><path fill="#fff" d="M12 5h10v4q-5 1-6 6t-6 7H5V16z"/><path fill="#d96c0b" d="M0 0h10v12l-5 5-5-5z"/><circle cx="5" cy="6" r="2" fill="#fff"/><circle cx="25" cy="25" r="4.500" fill="#d96c0b" stroke="#f4f4f4" stroke-width="1.500"/><circle cx="28" cy="18" r="2.600" fill="#d96c0b"/></svg>
   <svg width="28" height="28" viewBox="0 0 28 28" fill="none" stroke="#8e2f94" stroke-width="1.500"><path d="M10 27L1 15 11 3h5l11 12-10 12z"/><path d="M11 9l5-6 5 6-5 6zM16 15l5-6 6 6-5 6zM11 21l5-6 5 6-5 6z"/></svg>
   <svg width="28" height="28" viewBox="0 0 28 28" fill="#fff" stroke="#1a86e0" stroke-width="1.500"><path d="M1 4h17l9 11-9 11H1l9-11zM10 15l8-11M5 21L14 9M1 26l3-5h6l12-12M9 26l13-12"/></svg>
  </div>
  <div class="more">...</div>
  <div class="wells d-flex">
   <div class="fields">
    <div class="wlabel">Values</div>
    <div class="dash">Add data fields here</div>
    <div class="drill">Drill through</div>
    <div class="opt d-flex align-items-center"><span class="me-auto">Cross-report</span><div class="tg off"><i class="knob"></i><span>Off</span></div></div>
    <div class="opt d-flex align-items-center"><span class="me-auto">Keep all filters</span><div class="tg onn"><span>On</span><i class="knob"></i></div></div>
   </div>
   <div class="sb"></div>
  </div>
 </aside>

 <aside class="data flex-grow-1">
  <div class="phead d-flex align-items-center"><span class="ptitle">Data</span><svg class="ms-auto" width="12" height="12" viewBox="0 0 12 12" fill="none" stroke="#252423" stroke-width="1.600"><path d="M1 1l5 5-5 5M6 1l5 5-5 5"/></svg></div>
  <div class="dsearch d-flex align-items-center"><svg width="22" height="22" viewBox="0 0 22 22" fill="none" stroke="#616161" stroke-width="1.600"><circle cx="9" cy="9" r="8"/><path d="M15 15l6 6"/></svg><span>Search</span></div>
  <svg class="d-none"><symbol id="tbl" viewBox="0 0 54 18"><path stroke-width="1.300" d="M1 3l6 6-6 6"/><path stroke-width="1.600" d="M22 1h12q2 0 2 2v12q0 2-2 2H22q-2 0-2-2V3q0-2 2-2zM20 5h16M20 13h16M24.500 1v16M31.500 1v16"/></symbol></svg>
  <div class="tb cur d-flex align-items-center"><svg width="54" height="18" fill="none" stroke="#252423"><use href="#tbl"/></svg><span>customers</span></div>
  <div class="tb d-flex align-items-center"><svg width="54" height="18" fill="none" stroke="#252423"><use href="#tbl"/></svg><span>orders</span></div>
  <div class="tb d-flex align-items-center"><svg width="54" height="18" fill="none" stroke="#252423"><use href="#tbl"/></svg><span>products</span></div>
  <div class="tb d-flex align-items-center"><svg width="54" height="18" fill="none" stroke="#252423"><use href="#tbl"/></svg><span>Sales</span></div>
 </aside>
</main>
<footer class="status flex-shrink-0"><svg width="1906" height="11" viewBox="0 973 1906 11"><path fill="#333" d="M1649 982h6v2h-6z"/><path fill="#aaa" d="M1872 983h18v1h-18z"/><path stroke="#334" stroke-width="1.500" d="M1808 983.500h6M1817 983.500h5M1826 983.500h4M1834 983.500h4"/></svg></footer>
<script src="https://cdn.jsdelivr.net/npm/bootstrap@5.3.0/dist/js/bootstrap.bundle.min.js"></script>
</body>
</html>
